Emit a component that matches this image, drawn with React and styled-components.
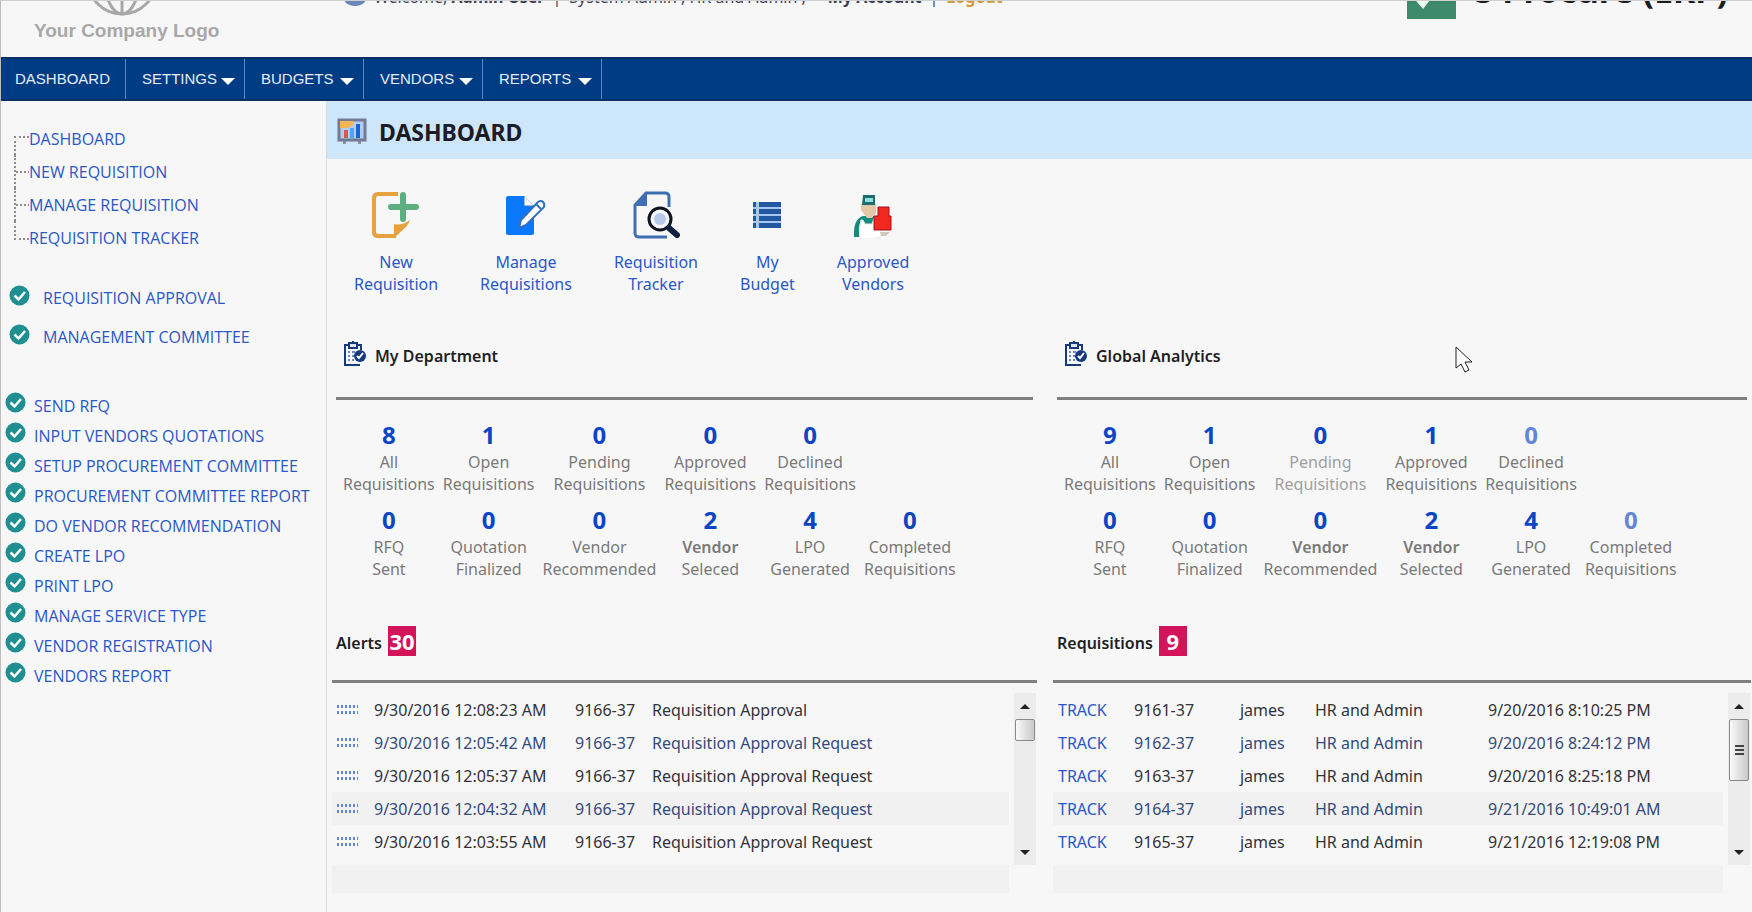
import styled, { createGlobalStyle, css } from 'styled-components'

const Global = createGlobalStyle`
*{box-sizing:border-box;}
body{
  margin:0;
  background:#f7f7f7;
  color:#333;
  font:16px/22px "Noto Sans", "Segoe UI", sans-serif;
}
a{
  color:#2a58c6;
  text-decoration:none;
}
ul{
  list-style:none;
  margin:0;
  padding:0;
}
svg{
  display:block;
  flex:none;
}
`
const Page = styled.div`
min-height:100vh;
display:flex;
flex-direction:column;
border-left:1px solid #bdbdbd;
border-top:1px solid #cfcfcf;
`
const Header = styled.header`
height:56px;
display:flex;
align-items:flex-start;
padding:0 24px 0 33px;
overflow:hidden;
`
const Logo = styled.div`
width:190px;
margin-top:-57px;
color:#a8a8a8;
font:bold 19px/26px "Liberation Sans", Arial, sans-serif;
white-space:nowrap;
svg{
  margin:0 0 2px 52px;
}
`
const Welcome = styled.div`
flex:1;
display:flex;
align-items:center;
gap:8px;
margin:-15px 0 0 120px;
color:#3a3f55;
white-space:nowrap;
`
const Account = styled.b`
margin-left:14px;
`
const Logout = styled.a`
color:#d39a3c;
font-weight:bold;
`
const Product = styled.div`
display:flex;
gap:14px;
margin-top:-33px;
font-size:34px;
line-height:44px;
font-weight:bold;
color:#1b1b22;
white-space:nowrap;
`
const Nav = styled.nav`
display:flex;
height:44px;
background:#003c84;
border-top:2px solid #0a2f63;
border-bottom:2px solid #0a2f63;
`
const NavItem = styled.a`
display:flex;
align-items:center;
justify-content:space-between;
min-width:${(props) => props.$menu ? '119px' : '125px'};
padding:0 9px 0 ${(props) => props.$menu ? '16px' : '14px'};
border-right:1px solid #5d88bd;
color:#e4edfb;
font:15px/20px "Liberation Sans", Arial, sans-serif;
`
const Caret = styled.i`
margin-top:4px;
border:7px solid transparent;
border-top-color:#fff;
border-bottom:0;
`
const Body = styled.div`
flex:1;
display:flex;
`
const Side = styled.aside`
flex:0 0 326px;
border-right:1px solid #dcdcdc;
padding-top:21px;
font-family:"Open Sans", "Segoe UI", sans-serif;
`
const Tree = styled.ul`
padding-left:13px;
`
const Branch = styled.li`
display:flex;
align-items:center;
height:33px;
&:before{
  content:'';
  align-self:${(props) => props.$first ? 'flex-end' : 'flex-start'};
  width:13px;
  height:${(props) => props.$first || props.$last ? '17px' : '33px'};
  border-left:2px dotted #8d8d8d;
  ${(props) => props.$first && css`border-top:2px dotted #8d8d8d;`}
  ${(props) => props.$last && css`border-bottom:2px dotted #8d8d8d;`}
  ${(props) => !props.$first && !props.$last && css`
  background:repeating-linear-gradient(90deg, #8d8d8d 0 2px, transparent 2px 4px) 0 50% / 100% 2px no-repeat;
  `}
}
`
const Steps = styled.ul`
padding:${(props) => props.$wide ? '24px 0 0 8px' : '35px 0 0 4px'};
li{
  display:flex;
  align-items:center;
  gap:${(props) => props.$wide ? '13px' : '8px'};
  height:${(props) => props.$wide ? '39px' : '30px'};
}
svg{
  margin-bottom:${(props) => props.$wide ? '5px' : '8px'};
}
`
const Main = styled.main`
flex:1;
min-width:0;
`
const Title = styled.h1`
display:flex;
align-items:center;
gap:12px;
height:58px;
margin:0;
padding:3px 0 0 10px;
background:#cde6fa;
color:#1c1c26;
font-size:23px;
line-height:30px;
`
const Shortcuts = styled.div`
display:flex;
gap:42px;
padding:32px 0 0 27px;
`
const Shortcut = styled.a`
display:flex;
flex-direction:column;
align-items:center;
gap:12px;
text-align:center;
white-space:pre-line;
`
const Panels = styled.div`
display:grid;
grid-template-columns:minmax(0, 1.01fr) minmax(0, 1fr);
column-gap:16px;
row-gap:33px;
padding:35px 1px 0 5px;
`
const Analytics = styled.section`
padding:0 4px;
`
const PanelHead = styled.h2`
display:flex;
align-items:center;
gap:8px;
height:70px;
margin:0;
padding:${(props) => props.$list ? '0 0 7px 4px' : '0 0 15px 7px'};
border-bottom:3px solid #808080;
color:#1f1f26;
font-size:16px;
line-height:22px;
font-weight:600;
svg{
  margin-bottom:4px;
}
`
const Stats = styled.div`
display:grid;
grid-template-columns:repeat(6, max-content);
gap:8px;
padding:18px 0 0 7px;
`
const Stat = styled.div`
grid-column:${(props) => props.$col};
text-align:center;
color:${(props) => props.$pale ? '#a0a0a0' : '#7a7a7a'};
`
const Count = styled.a`
display:block;
font-size:24px;
line-height:33px;
font-weight:bold;
color:${(props) => props.$pale ? '#6486d6' : '#0b45c6'};
`
const Word = styled.span`
display:block;
font-weight:${(props) => props.$bold ? '600' : 'normal'};
`
const Badge = styled.span`
min-width:28px;
margin-left:-2px;
margin-bottom:5px;
background:#d4145a;
color:#fff;
font-size:22px;
line-height:30px;
font-weight:bold;
text-align:center;
`
const ListWrap = styled.div`
display:flex;
height:172px;
margin-top:10px;
`
const Table = styled.table`
flex:1;
align-self:flex-start;
table-layout:fixed;
border-collapse:collapse;
white-space:nowrap;
td{
  height:33px;
  padding:0;
}
td:first-child{
  padding-left:5px;
}
tr{
  color:#333338;
}
tr:nth-child(even){
  color:#354a7a;
}
tr:nth-child(4){
  background:#f1f1f1;
}
`
const Dots = styled.a`
display:block;
width:21px;
height:9px;
background:
  repeating-linear-gradient(90deg, #5f86d8 0 2px, transparent 2px 4px) 0 0 / 100% 3px no-repeat,
  repeating-linear-gradient(90deg, #5f86d8 0 2px, transparent 2px 4px) 0 100% / 100% 3px no-repeat;
`
const Bar = styled.div`
display:flex;
flex-direction:column;
align-items:center;
width:22px;
margin:0 1px 0 5px;
background:#ececec;
`
const Arrow = styled.button`
display:flex;
align-items:center;
justify-content:center;
width:22px;
height:26px;
padding:0;
border:0;
background:none;
&:before{
  content:'';
  border:5px solid transparent;
  ${(props) => props.$down ? 'border-top-color:#222;border-bottom:0;' : 'border-bottom-color:#222;border-top:0;'}
}
`
const Thumb = styled.div`
display:flex;
align-items:center;
justify-content:center;
width:20px;
height:${(props) => props.$tall ? '62px' : '22px'};
margin-bottom:auto;
border:1px solid #8b8b8b;
border-radius:2px;
background:linear-gradient(90deg, #fafafa, #c9c9c9);
&:before{
  content:'';
  width:9px;
  height:${(props) => props.$tall ? '10px' : '0'};
  background:repeating-linear-gradient(#444 0 2px, transparent 2px 4px);
}
`
const NextRow = styled.div`
height:28px;
margin-right:28px;
background:#f1f1f1;
`
const Cursor = styled.svg`
position:absolute;
left:1455px;
top:345px;
`

const nav = ['DASHBOARD', 'SETTINGS', 'BUDGETS', 'VENDORS', 'REPORTS']
const tree = ['DASHBOARD', 'NEW REQUISITION', 'MANAGE REQUISITION', 'REQUISITION TRACKER']
const approvals = ['REQUISITION APPROVAL', 'MANAGEMENT COMMITTEE']
const steps = [
  'SEND RFQ',
  'INPUT VENDORS QUOTATIONS',
  'SETUP PROCUREMENT COMMITTEE',
  'PROCUREMENT COMMITTEE REPORT',
  'DO VENDOR RECOMMENDATION',
  'CREATE LPO',
  'PRINT LPO',
  'MANAGE SERVICE TYPE',
  'VENDOR REGISTRATION',
  'VENDORS REPORT',
]
const department = [
  { n: 8, a: 'All', b: 'Requisitions' },
  { n: 1, a: 'Open', b: 'Requisitions' },
  { n: 0, a: 'Pending', b: 'Requisitions' },
  { n: 0, a: 'Approved', b: 'Requisitions' },
  { n: 0, a: 'Declined', b: 'Requisitions' },
  { n: 0, a: 'RFQ', b: 'Sent', col: 1 },
  { n: 0, a: 'Quotation', b: 'Finalized' },
  { n: 0, a: 'Vendor', b: 'Recommended' },
  { n: 2, a: 'Vendor', b: 'Seleced', bold: true },
  { n: 4, a: 'LPO', b: 'Generated' },
  { n: 0, a: 'Completed', b: 'Requisitions' },
]
const globalStats = [
  { n: 9, a: 'All', b: 'Requisitions' },
  { n: 1, a: 'Open', b: 'Requisitions' },
  { n: 0, a: 'Pending', b: 'Requisitions', pale: true },
  { n: 1, a: 'Approved', b: 'Requisitions' },
  { n: 0, a: 'Declined', b: 'Requisitions', paleCount: true },
  { n: 0, a: 'RFQ', b: 'Sent', col: 1 },
  { n: 0, a: 'Quotation', b: 'Finalized' },
  { n: 0, a: 'Vendor', b: 'Recommended', bold: true },
  { n: 2, a: 'Vendor', b: 'Selected', bold: true },
  { n: 4, a: 'LPO', b: 'Generated' },
  { n: 0, a: 'Completed', b: 'Requisitions', paleCount: true },
]
const alerts = [
  ['9/30/2016 12:08:23 AM', '9166-37', 'Requisition Approval'],
  ['9/30/2016 12:05:42 AM', '9166-37', 'Requisition Approval Request'],
  ['9/30/2016 12:05:37 AM', '9166-37', 'Requisition Approval Request'],
  ['9/30/2016 12:04:32 AM', '9166-37', 'Requisition Approval Request'],
  ['9/30/2016 12:03:55 AM', '9166-37', 'Requisition Approval Request'],
]
const requisitions = [
  ['9161-37', 'james', 'HR and Admin', '9/20/2016 8:10:25 PM'],
  ['9162-37', 'james', 'HR and Admin', '9/20/2016 8:24:12 PM'],
  ['9163-37', 'james', 'HR and Admin', '9/20/2016 8:25:18 PM'],
  ['9164-37', 'james', 'HR and Admin', '9/21/2016 10:49:01 AM'],
  ['9165-37', 'james', 'HR and Admin', '9/21/2016 12:19:08 PM'],
]

const Globe = () => (
  <svg width="72" height="72" viewBox="0 0 72 72" fill="none" stroke="#a8a8a8" strokeWidth="3">
    <circle cx="36" cy="36" r="34" />
    <ellipse cx="36" cy="36" rx="17" ry="34" />
    <path d="M36 2v68M2 36h68M8 17q28 12 56 0M8 56q28 -9 56 0" />
  </svg>
)
const Person = () => (
  <svg width="22" height="18" viewBox="0 0 22 18">
    <circle cx="11" cy="5" r="5" fill="#c9b48c" />
    <path d="M1 14q0-5 10-5t10 5q-4 4-10 4t-10-4z" fill="#6d86b8" />
  </svg>
)
const Tick = () => (
  <svg width="51" height="52" viewBox="0 0 51 52">
    <path d="M1 1h49v50H1z" fill="#3d8a6d" />
    <path d="M9 28l8 9 22-29" fill="none" stroke="#e9fbf3" strokeWidth="5" />
  </svg>
)
const Check = () => (
  <svg width="21" height="21" viewBox="0 0 42 42">
    <circle cx="21" cy="21" r="20" fill="#1f8f92" />
    <path d="M11 21l8 8 13-15" fill="none" stroke="#fff" strokeWidth="5" />
  </svg>
)
const Board = () => (
  <svg width="30" height="27" viewBox="0 0 30 27">
    <path d="M6 23h3v3H6zM21 23h3v3h-3z" fill="#8a8fa3" />
    <path d="M2 2h26v20H2z" fill="#b4cdf2" stroke="#737a94" strokeWidth="3" />
    <path d="M3 3h13v4l-5 3H3z" fill="#f3b558" />
    <path d="M7 12h4v8H7z" fill="#d9534f" />
    <path d="M13 10h4v10h-4z" fill="#4da3f5" />
    <path d="M19 6h4v14h-4z" fill="#1c63d6" />
  </svg>
)
const Clipboard = () => (
  <svg width="24" height="26" viewBox="0 0 24 26" fill="none" stroke="#163a7c" strokeWidth="2">
    <path d="M17 24H2V4h16v5" />
    <path d="M6 2h8v5H6z" fill="#dbe6fa" />
    <path d="M10 0v3" />
    <path d="M5 11h2M5 15h2M5 19h2M9 11h3M9 15h2M9 19h2" stroke="#6b8ac2" />
    <circle cx="17" cy="15" r="6" fill="#163a7c" stroke="none" />
    <path d="M14 15l2 2 4-5" stroke="#fff" />
  </svg>
)

const NewIcon = () => (
  <svg width="48" height="48" viewBox="0 0 48 48">
    <path d="M26 3H6q-4 0-4 4v34q0 4 4 4h18" fill="none" stroke="#e6a23c" strokeWidth="4" />
    <path d="M22 47V33q7 2 16-4-2 5-4 7z" fill="#e6a23c" />
    <path d="M31 4v24M19 16h25" stroke="#5fae7f" strokeWidth="6" strokeLinecap="round" />
  </svg>
)
const ManageIcon = () => (
  <svg width="48" height="48" viewBox="0 0 48 48">
    <path d="M6 5h16l10 10v27q0 2-2 2H6q-2 0-2-2V7q0-2 2-2z" fill="#0a78fb" />
    <path d="M22 5v10h10" fill="#f7f7f7" stroke="#3a78c8" />
    <path d="M17 37l2-8 17-18q3-2 5 0t1 5L24 34z" fill="#fff" stroke="#2f6fc4" strokeWidth="2" />
    <path d="M34 13l5 5" stroke="#2f6fc4" strokeWidth="2" />
  </svg>
)
const TrackIcon = () => (
  <svg width="48" height="48" viewBox="0 0 48 48" fill="none">
    <path d="M37 16V6q0-4-4-4H14L3 14v28q0 4 4 4h28" stroke="#3f6fb3" strokeWidth="3" />
    <path d="M15 2v13H3z" fill="#3f6fb3" />
    <circle cx="28" cy="28" r="11" fill="#f4f7fd" stroke="#10131f" strokeWidth="3" />
    <circle cx="28" cy="28" r="6" fill="#b8c9ea" />
    <path d="M37 37l8 7" stroke="#10203f" strokeWidth="6" strokeLinecap="round" />
  </svg>
)
const BudgetIcon = () => (
  <svg width="48" height="48" viewBox="0 0 48 48">
    <path d="M10 11h28v26H10z" fill="#a9c8f0" />
    <path d="M10 11h3v5h-3zM10 18h3v5h-3zM10 25h3v5h-3zM10 32h3v5h-3zM16 11h22v5H16zM16 18h22v5H16zM16 25h22v5H16zM16 32h22v5H16z" fill="#22589f" />
  </svg>
)
const VendorIcon = () => (
  <svg width="48" height="48" viewBox="0 0 48 48">
    <path d="M5 46q-1-18 9-21h12l4 21z" fill="#16897b" />
    <path d="M12 13h15v9l-4 5h-5l-6-8z" fill="#e3c9a6" />
    <path d="M14 4h12v10H13z" fill="#1c6f70" />
    <path d="M16 7h8v4h-8z" fill="#8fe0dc" />
    <path d="M12 29h2l2 4h7l2-6 3 2 5 14q-2 5-10 5H11q-2-10 1-19z" fill="#fff" stroke="#e6e6e6" />
    <path d="M29 16h11v9h2v14H25V25h4z" fill="#f0281f" stroke="#a80f1c" />
    <path d="M31 41h10l-4 4h-5z" fill="#cfc9bf" />
  </svg>
)
const shortcuts = [
  ['New\nRequisition', NewIcon],
  ['Manage\nRequisitions', ManageIcon],
  ['Requisition\nTracker', TrackIcon],
  ['My\nBudget', BudgetIcon],
  ['Approved\nVendors', VendorIcon],
]

const StatBoard = ({ title, data }) => (
  <Analytics>
    <PanelHead><Clipboard />{title}</PanelHead>
    <Stats>
      {data.map((s, key) => (
        <Stat key={key} $col={s.col || 'auto'} $pale={s.pale}>
          <Count href="#" $pale={s.paleCount}>{s.n}</Count>
          <Word $bold={s.bold}>{s.a}</Word>
          <Word>{s.b}</Word>
        </Stat>
      ))}
    </Stats>
  </Analytics>
)

const ScrollBar = ({ tall }) => (
  <Bar>
    <Arrow type="button" aria-label="Scroll up" />
    <Thumb $tall={tall} />
    <Arrow type="button" aria-label="Scroll down" $down />
  </Bar>
)

const List = ({ title, count, widths, rows, lead, tall }) => (
  <section>
    <PanelHead $list>{title}<Badge>{count}</Badge></PanelHead>
    <ListWrap>
      <Table>
        <colgroup>
          {widths.map((w, key) => <col key={key} width={w} />)}
          <col />
        </colgroup>
        <tbody>
          {rows.map((row, key) => (
            <tr key={key}>
              <td>{lead}</td>
              {row.map((cell, i) => <td key={i}>{cell}</td>)}
            </tr>
          ))}
        </tbody>
      </Table>
      <ScrollBar tall={tall} />
    </ListWrap>
    <NextRow />
  </section>
)

const App = () => (
  <Page>
    <Global />
    <Header>
      <Logo><Globe />Your Company Logo</Logo>
      <Welcome>
        <Person />
        <span>Welcome, <b>Admin User</b></span>
        <span>|</span>
        <span>System Admin , HR and Admin ,</span>
        <Account>My Account</Account>
        <span>|</span>
        <Logout href="#">Logout</Logout>
      </Welcome>
      <Product><Tick />e-Procure (ERP)</Product>
    </Header>
    <Nav>
      {nav.map((item, key) => (
        <NavItem key={item} href="#" $menu={key > 0}>{item}{key > 0 && <Caret />}</NavItem>
      ))}
    </Nav>
    <Body>
      <Side>
        <Tree>
          {tree.map((item, key) => (
            <Branch key={item} $first={key === 0} $last={key === tree.length - 1}><a href="#">{item}</a></Branch>
          ))}
        </Tree>
        <Steps $wide>
          {approvals.map((item) => <li key={item}><Check /><a href="#">{item}</a></li>)}
        </Steps>
        <Steps>
          {steps.map((item) => <li key={item}><Check /><a href="#">{item}</a></li>)}
        </Steps>
      </Side>
      <Main>
        <Title><Board />DASHBOARD</Title>
        <Shortcuts>
          {shortcuts.map(([label, Icon]) => <Shortcut key={label} href="#"><Icon />{label}</Shortcut>)}
        </Shortcuts>
        <Panels>
          <StatBoard title="My Department" data={department} />
          <StatBoard title="Global Analytics" data={globalStats} />
          <List title="Alerts" count={30} widths={[42, 201, 77]} rows={alerts} lead={<Dots href="#" aria-label="Open alert" />} />
          <List title="Requisitions" count={9} widths={[81, 106, 75, 173]} rows={requisitions} lead={<a href="#">TRACK</a>} tall />
        </Panels>
      </Main>
    </Body>
    <Cursor width="18" height="29" viewBox="0 0 18 29">
      <path d="M1 2v21l5-4 4 8 4-2-4-8h7z" fill="#fff" stroke="#222" />
    </Cursor>
  </Page>
)
export default App
